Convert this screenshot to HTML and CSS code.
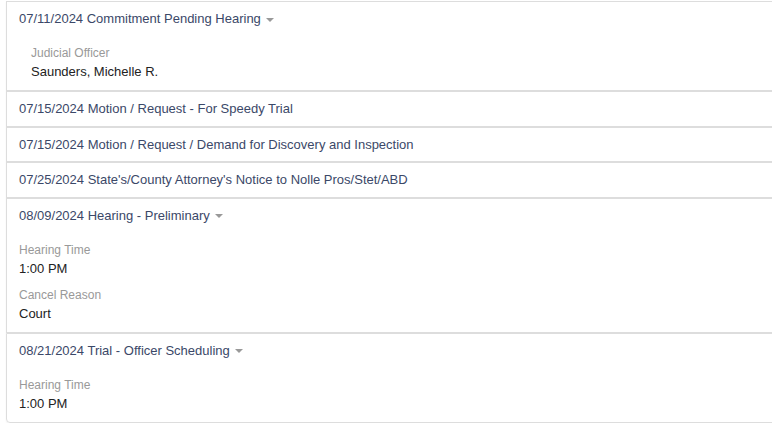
FILE: index.html
```html
<!DOCTYPE html>
<html lang="en">
<head>
    <meta charset="UTF-8">
    <title>Case Events</title>
    <link rel="stylesheet" href="styles.css">
</head>
<body>
    <div class="event-list">
        <div class="event-item">
            <div class="event-title">07/11/2024 Commitment Pending Hearing <span class="caret"></span></div>
            <div class="event-details indented">
                <div class="detail-label">Judicial Officer</div>
                <div class="detail-value">Saunders, Michelle R.</div>
            </div>
        </div>
        <div class="event-item">
            <div class="event-title">07/15/2024 Motion / Request - For Speedy Trial</div>
        </div>
        <div class="event-item">
            <div class="event-title">07/15/2024 Motion / Request / Demand for Discovery and Inspection</div>
        </div>
        <div class="event-item">
            <div class="event-title">07/25/2024 State's/County Attorney's Notice to Nolle Pros/Stet/ABD</div>
        </div>
        <div class="event-item">
            <div class="event-title">08/09/2024 Hearing - Preliminary <span class="caret"></span></div>
            <div class="event-details">
                <div class="detail-label">Hearing Time</div>
                <div class="detail-value">1:00 PM</div>
                <div class="detail-label">Cancel Reason</div>
                <div class="detail-value">Court</div>
            </div>
        </div>
        <div class="event-item">
            <div class="event-title">08/21/2024 Trial - Officer Scheduling <span class="caret"></span></div>
            <div class="event-details">
                <div class="detail-label">Hearing Time</div>
                <div class="detail-value">1:00 PM</div>
            </div>
        </div>
    </div>
</body>
</html>
```

FILE: styles.css
```css
* {
    margin: 0;
    padding: 0;
    box-sizing: border-box;
}

body {
    font-family: "Liberation Sans", Arial, sans-serif;
    font-size: 13px;
    background: #fff;
    color: #222;
    padding: 1px 0 0 6px;
    overflow: hidden;
}

.event-list {
    width: 820px;
    border-radius: 0 0 4px 4px;
    box-shadow: 0 1px 2px rgba(0, 0, 0, 0.06);
}

.event-item {
    border: 1px solid #dddddd;
    padding: 7px 12px 6.5px 12px;
}

.event-item:last-child {
    border-radius: 0 0 4px 4px;
}

.event-title {
    color: #3b4868;
    line-height: 20px;
}

.caret {
    display: inline-block;
    width: 0;
    height: 0;
    margin-left: 2px;
    vertical-align: middle;
    border-top: 4px solid #999;
    border-left: 4px solid transparent;
    border-right: 4px solid transparent;
}

.event-details {
    margin-top: 15px;
    padding-bottom: 1.5px;
}

.event-details.indented {
    padding-left: 12px;
}

.detail-label {
    font-size: 12px;
    line-height: 18px;
    color: #999;
}

.detail-value {
    line-height: 20px;
    color: #222;
    margin-bottom: 7px;
}

.detail-value:last-child {
    margin-bottom: 0;
}
```
